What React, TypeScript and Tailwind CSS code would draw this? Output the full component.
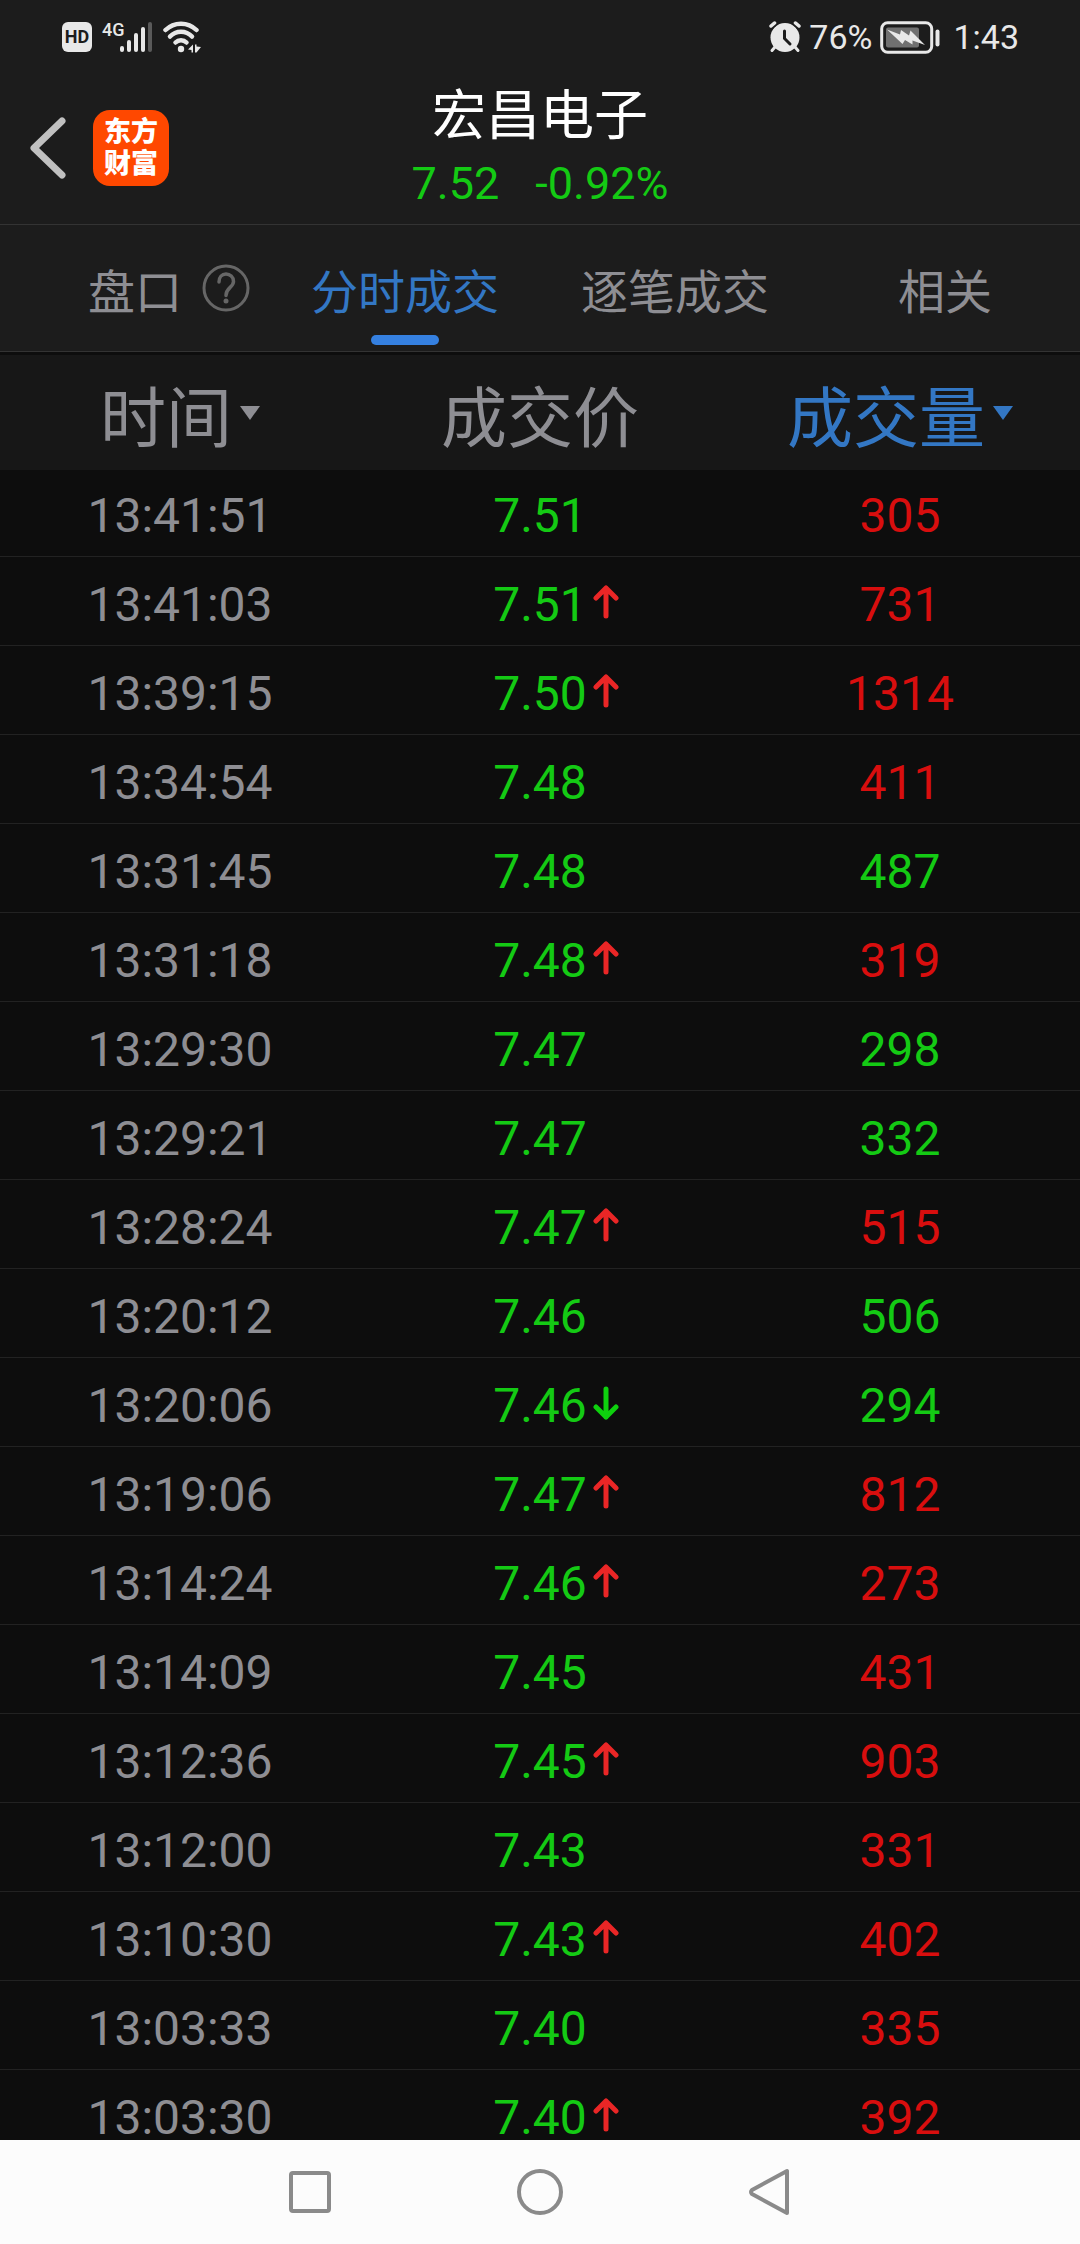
import React, { useState } from 'react';
import clsx from 'clsx';

type Trend = 'up' | 'down';

interface Trade {
  time: string;
  price: string;
  move?: Trend;
  volume: number;
  side: Trend;
}

const trades: Trade[] = [
  { time: '13:41:51', price: '7.51', volume: 305, side: 'up' },
  { time: '13:41:03', price: '7.51', move: 'up', volume: 731, side: 'up' },
  { time: '13:39:15', price: '7.50', move: 'up', volume: 1314, side: 'up' },
  { time: '13:34:54', price: '7.48', volume: 411, side: 'up' },
  { time: '13:31:45', price: '7.48', volume: 487, side: 'down' },
  { time: '13:31:18', price: '7.48', move: 'up', volume: 319, side: 'up' },
  { time: '13:29:30', price: '7.47', volume: 298, side: 'down' },
  { time: '13:29:21', price: '7.47', volume: 332, side: 'down' },
  { time: '13:28:24', price: '7.47', move: 'up', volume: 515, side: 'up' },
  { time: '13:20:12', price: '7.46', volume: 506, side: 'down' },
  { time: '13:20:06', price: '7.46', move: 'down', volume: 294, side: 'down' },
  { time: '13:19:06', price: '7.47', move: 'up', volume: 812, side: 'up' },
  { time: '13:14:24', price: '7.46', move: 'up', volume: 273, side: 'up' },
  { time: '13:14:09', price: '7.45', volume: 431, side: 'up' },
  { time: '13:12:36', price: '7.45', move: 'up', volume: 903, side: 'up' },
  { time: '13:12:00', price: '7.43', volume: 331, side: 'up' },
  { time: '13:10:30', price: '7.43', move: 'up', volume: 402, side: 'up' },
  { time: '13:03:33', price: '7.40', volume: 335, side: 'up' },
  { time: '13:03:30', price: '7.40', move: 'up', volume: 392, side: 'up' },
];

const tabs = ['盘口', '分时成交', '逐笔成交', '相关'];

const StatusBar = () => (
  <div className="flex h-[74px] items-center justify-between pr-[61px] pl-[62px] text-[#e8e8e8]">
    <div className="flex items-center gap-[10px]">
      <span className="flex h-[30px] w-[30px] items-center justify-center rounded-md bg-[#e8e8e8] text-[18px] leading-none font-bold text-[#1c1c1c]">
        HD
      </span>
      <div className="flex items-start">
        <span className="w-[18px] text-[18px] leading-none font-medium">4G</span>
        <svg className="h-8 w-[33px]" viewBox="0 0 33 32" fill="currentColor">
          <rect x="0" y="25" width="4" height="6" rx="2" />
          <rect x="7" y="19" width="4" height="12" rx="2" />
          <rect x="14" y="12" width="4" height="19" rx="2" />
          <rect x="21" y="6" width="4" height="25" rx="2" />
          <rect x="28" y="1" width="4" height="30" rx="2" fill="#5a5a5a" />
        </svg>
      </div>
      <svg className="h-8 w-[38px]" viewBox="0 0 38 32" fill="none" stroke="currentColor" strokeWidth="4.500" strokeLinecap="round">
        <path d="M2.500 9C11 0.500 25 0.500 33.500 9" />
        <path d="M7 15.500C13 9 23 9 29 15.500" />
        <path d="M12.500 21.500C15.500 18.500 20.500 18.500 23.500 21.500" />
        <circle cx="18" cy="28" r="3.200" fill="currentColor" stroke="none" />
        <path d="M30 23.500v8h-1.500v-2.500L25 28.500zM32 23.500h1.500v2L38 26l-4.500 5.500H32z" fill="currentColor" stroke="none" />
      </svg>
    </div>

    <div className="flex items-center gap-3 text-[34px] leading-none">
      <div className="flex items-center gap-2">
        <svg className="h-8 w-8" viewBox="0 0 32 32" fill="none" stroke="currentColor" strokeWidth="4" strokeLinecap="round">
          <circle cx="16" cy="16.500" r="14.500" fill="currentColor" stroke="none" />
          <path d="M1.500 5.500l4-4M30.500 5.500l-4-4" stroke="#1c1c1c" strokeWidth="7" />
          <path d="M2 5l3.500-3M30 5l-3.500-3" strokeWidth="3.500" />
          <path d="M6 26l-3 3.500M26 26l3 3.500" strokeWidth="3" />
          <path d="M15.500 10v7.500l5.500 5.500" stroke="#1c1c1c" strokeWidth="3" />
        </svg>
        <span>76%</span>
        <svg className="h-[33px] w-[61px]" viewBox="0 0 61 33" fill="none">
          <rect x="1.700" y="1.700" width="50" height="29.500" rx="6" stroke="currentColor" strokeWidth="3" />
          <rect x="6" y="6.500" width="33" height="20" rx="2" fill="#707070" />
          <rect x="55.500" y="8.500" width="4" height="17" rx="2" fill="currentColor" />
          <path d="M7 8.500L20 13.500L21 9L29 14.500L30.500 9.500L45 24L32.500 19.500V23.500L25 19L22.500 23z" fill="currentColor" />
        </svg>
      </div>
      <span>1:43</span>
    </div>
  </div>
);

const TitleBar = () => (
  <header className="grid grid-cols-[1fr_auto_1fr] border-b border-[#333333] pt-2 pb-3.5">
    <div className="flex items-end gap-[27px] pb-6 pl-[30px]">
      <button type="button" aria-label="返回" className="flex h-[76px] items-center">
        <svg className="h-[62px] w-9" viewBox="0 0 36 62" fill="none" stroke="#c0c0c0" strokeWidth="7" strokeLinecap="round" strokeLinejoin="round">
          <path d="M32 4L4 31l28 27" />
        </svg>
      </button>
      <a
        href="#home"
        className="flex h-[76px] w-[76px] items-center justify-center rounded-[17px] bg-[#ff4800] text-center text-[27px] leading-8 font-black text-white"
      >
        东方
        <br />
        财富
      </a>
    </div>
    <div className="flex flex-col items-center gap-4">
      <h1 className="font-['Noto_Sans_CJK_SC',sans-serif] text-[54px] leading-[60px] text-white">宏昌电子</h1>
      <p className="flex gap-9 text-[45px] leading-[52px] text-[#14ca14]">
        <span>7.52</span>
        <span>-0.92%</span>
      </p>
    </div>
  </header>
);

const TabBar = () => {
  const [active, setActive] = useState('分时成交');

  return (
    <nav className="grid grid-cols-4 border-b border-[#333333] font-['Noto_Sans_CJK_SC',sans-serif]">
      {tabs.map((tab) => (
        <button
          key={tab}
          type="button"
          onClick={() => setActive(tab)}
          className={clsx(
            'relative flex h-[126px] items-center justify-center text-[47px] leading-none',
            tab === active ? 'text-[#3377c4]' : 'text-[#8e8e93]'
          )}
        >
          <span className="relative">
            {tab}
            {tab === '盘口' && (
              <svg
                className="absolute -top-px left-full ml-5 h-12 w-12"
                viewBox="0 0 48 48"
                fill="none"
                stroke="#666666"
                strokeWidth="3"
                strokeLinecap="round"
              >
                <circle cx="24" cy="24" r="22" />
                <path d="M17 18c0-5 3-8 7-8s7.500 3 7.500 7.500c0 6-7.500 6-7.500 14" strokeWidth="3.500" />
                <circle cx="24" cy="37" r="2.500" fill="#666666" stroke="none" />
              </svg>
            )}
          </span>
          {tab === active && (
            <span className="absolute bottom-1.5 h-[10px] w-[68px] rounded-full bg-[#3580e0]" />
          )}
        </button>
      ))}
    </nav>
  );
};

const SortMark = () => (
  <svg className="h-[14px] w-5" viewBox="0 0 20 14" fill="currentColor">
    <path d="M0 0h20L10 14z" />
  </svg>
);

const MoveArrow = ({ move }: { move: Trend }) => (
  <svg
    className={clsx(
      'absolute top-0.5 left-full ml-1.5 h-[34px] w-[26px]',
      move === 'up' ? 'text-[#ea2626]' : 'rotate-180 text-[#0ed00e]'
    )}
    viewBox="0 0 26 34"
    fill="none"
    stroke="currentColor"
    strokeWidth="5"
    strokeLinecap="round"
    strokeLinejoin="round"
  >
    <path d="M13 3v28M3 13L13 3l10 10" />
  </svg>
);

const TradeTable = () => (
  <table className="w-full table-fixed border-separate border-spacing-0">
    <thead className="bg-[#171717] font-['Noto_Sans_CJK_SC',sans-serif] text-[66px] leading-none text-[#8e8e93]">
      <tr className="h-[115px]">
        <th className="p-0 font-normal">
          <button type="button" className="flex w-full items-center justify-center gap-2">
            时间
            <SortMark />
          </button>
        </th>
        <th className="p-0 font-normal">成交价</th>
        <th className="p-0 font-normal">
          <button type="button" className="flex w-full items-center justify-center gap-2 text-[#3377c4]">
            成交量
            <SortMark />
          </button>
        </th>
      </tr>
    </thead>
    <tbody className="text-center align-bottom text-[48px] leading-[44px]">
      {trades.map((trade) => (
        <tr key={trade.time} className="h-[89px] first:h-[87px]">
          <td className="border-b border-[#222222] p-0 pb-[18px] text-[#8e8e93]">{trade.time}</td>
          <td className="border-b border-[#222222] p-0 pb-[18px] text-[#14ca14]">
            <span className="relative inline-block">
              {trade.price}
              {trade.move && <MoveArrow move={trade.move} />}
            </span>
          </td>
          <td
            className={clsx(
              'border-b border-[#222222] p-0 pb-[18px]',
              trade.side === 'up' ? 'text-[#d80e0e]' : 'text-[#14ca14]'
            )}
          >
            {trade.volume}
          </td>
        </tr>
      ))}
    </tbody>
  </table>
);

const SystemNav = () => (
  <div className="flex h-[104px] shrink-0 items-center justify-center bg-[#fcfcfc] text-[#8a8a8a]">
    <button type="button" aria-label="最近任务" className="flex w-[230px] justify-center">
      <svg className="h-12 w-12" viewBox="0 0 48 48" fill="none" stroke="currentColor" strokeWidth="4">
        <rect x="5" y="5" width="38" height="38" rx="2" />
      </svg>
    </button>
    <button type="button" aria-label="主屏幕" className="flex w-[230px] justify-center">
      <svg className="h-12 w-12" viewBox="0 0 48 48" fill="none" stroke="currentColor" strokeWidth="4">
        <circle cx="24" cy="24" r="21" />
      </svg>
    </button>
    <button type="button" aria-label="返回上一页" className="flex w-[230px] justify-center">
      <svg className="h-12 w-12" viewBox="0 0 48 48" fill="none" stroke="currentColor" strokeWidth="4" strokeLinejoin="round">
        <path d="M41 3v42L6 26q-2-2 0-4z" />
      </svg>
    </button>
  </div>
);

const App = () => {
  return (
    <div className="flex h-screen flex-col bg-[#0d0d0d] font-['Roboto','Noto_Sans_CJK_SC',sans-serif]">
      <div className="bg-[#1c1c1c]">
        <StatusBar />
        <TitleBar />
        <TabBar />
      </div>
      <main className="min-h-0 flex-1 overflow-hidden pt-[3px]">
        <TradeTable />
      </main>
      <SystemNav />
    </div>
  );
};

export default App;
